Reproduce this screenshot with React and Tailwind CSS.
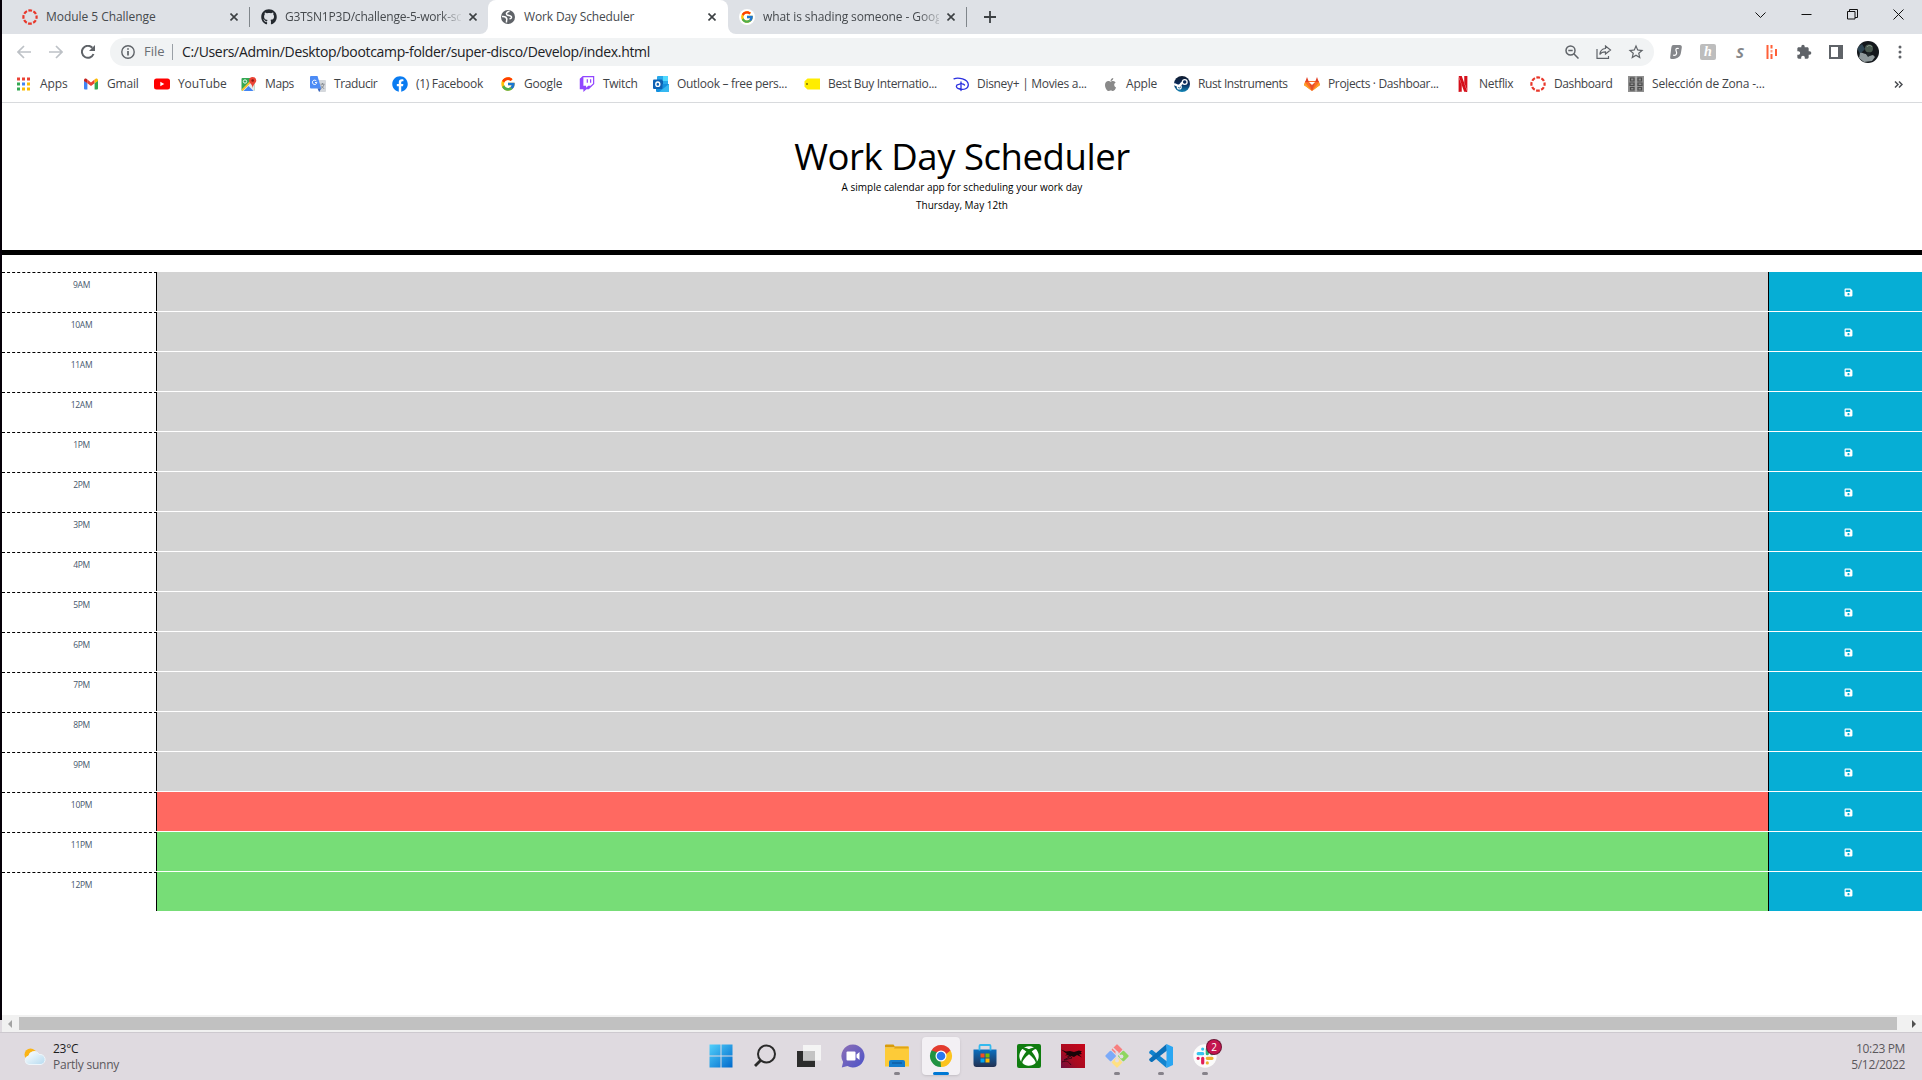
import React from "react";
import { FaGithub, FaTwitch, FaFacebook, FaApple, FaXbox, FaSave } from "react-icons/fa";
import { FcGoogle } from "react-icons/fc";
import { SiNetflix } from "react-icons/si";
import { MdExtension, MdStarBorder } from "react-icons/md";

const Canvas = () => (
  <svg viewBox="0 0 16 16" className="size-4 shrink-0" fill="none">
    <circle cx="8" cy="8" r="6.6" stroke="#e8372a" strokeWidth="2.2" strokeDasharray="3.7 1.484" strokeDashoffset="1.85" />
  </svg>
);

const Close = () => (
  <svg viewBox="0 0 8 8" className="size-2 shrink-0" stroke="#3c4043" strokeWidth="1.6">
    <path d="M.5.5l7 7M7.5.5l-7 7" />
  </svg>
);

const Globe = () => (
  <svg viewBox="0 0 16 16" className="size-4 shrink-0">
    <circle cx="8" cy="8" r="7" fill="#5f6368" />
    <path d="M9.500 2.200C6.500 3 5.800 4.500 7 5.800c1.500 1.200 3 .3 4.200 1.700.8 1.200-.2 2.300-1.700 2.300M2 7.500c2.500-.3 4.500.8 4.800 2.500.1 1.200-.6 1.800-.2 3.500" stroke="#fff" strokeWidth="1.500" fill="none" />
  </svg>
);

const AppsIcon = () => (
  <svg viewBox="0 0 16 16" className="size-4">
    {["#ea4335", "#ea4335", "#ea4335", "#34a853", "#4285f4", "#fbbc04", "#34a853", "#fbbc04", "#fbbc04"].map((c, i) => (
      <rect key={i} x={1 + (i % 3) * 5} y={1.5 + Math.floor(i / 3) * 5} width="3" height="3" fill={c} />
    ))}
  </svg>
);

const Gmail = () => (
  <svg viewBox="0 0 16 16" className="size-4">
    <path d="M1 4.5l3.4 2.6V13.5H2a1 1 0 0 1-1-1z" fill="#4285f4" />
    <path d="M15 4.5l-3.4 2.6v6.4H14a1 1 0 0 0 1-1z" fill="#34a853" />
    <path d="M4.4 3.6L8 6.4l3.6-2.8v3.7L8 10 4.4 7.3z" fill="#ea4335" />
    <path d="M1 4.3c0-1.8 1.7-2.1 2.6-1.4l.8.7v3.7L1 4.9z" fill="#c5221f" />
    <path d="M15 4.3c0-1.8-1.7-2.1-2.6-1.4l-.8.7v3.7L15 4.9z" fill="#fbbc04" />
  </svg>
);

const YouTube = () => (
  <svg viewBox="0 0 16 16" className="size-4">
    <rect y="2.5" width="16" height="11" rx="2.5" fill="#f00" />
    <path d="M6.3 5.7v4.6l4-2.3z" fill="#fff" />
  </svg>
);

const Maps = () => (
  <svg viewBox="0 0 16 16" className="size-4">
    <rect x=".5" y="2" width="13" height="13" rx="1" fill="#34a853" />
    <path d="M1 15L12 4l1.5 1.5v9.5z" fill="#e8eaed" />
    <path d="M2.5 15l5-5 5 5z" fill="#4285f4" />
    <path d="M.5 13.5l10-10 1.3 1.3L1.6 15z" fill="#fbc02d" />
    <circle cx="4" cy="5.5" r="1.7" fill="none" stroke="#fff" strokeWidth=".9" />
    <path d="M11.7 1a3.6 3.6 0 0 1 3.6 3.6c0 2.4-3.2 3.7-3.6 7.4-.4-3.7-3.6-5-3.6-7.4A3.6 3.6 0 0 1 11.7 1z" fill="#ea4335" />
    <circle cx="11.7" cy="4.5" r="1.3" fill="#8c1a13" />
  </svg>
);

const Translate = () => (
  <svg viewBox="0 0 16 16" className="size-4">
    <path d="M6 4h9a1 1 0 0 1 1 1v10a1 1 0 0 1-1 1H9z" fill="#d5d8dc" />
    <path d="M1 0h6.5l3.7 12.5H1a1 1 0 0 1-1-1V1a1 1 0 0 1 1-1z" fill="#4c8bf5" />
    <path d="M7.5 12.5h3.7L9.2 16z" fill="#3060c0" />
    <path d="M6.500 5.200A2.200 2.200 0 1 0 6.800 6.500H5" stroke="#fff" fill="none" />
    <path d="M10.500 8.200h4M12.500 7v1.200M14 8.500c-.6 2-1.800 3.200-3 4M11 9.500l3 3.300" stroke="#80868b" strokeWidth=".9" fill="none" />
  </svg>
);

const Facebook = () => <FaFacebook className="size-4 text-[#0b7cf1]" />;

const Outlook = () => (
  <svg viewBox="0 0 16 16" className="size-4">
    <rect x="4" width="11" height="9" rx="1" fill="#28a8ea" />
    <path d="M10 0h4a1 1 0 0 1 1 1v4h-5z" fill="#50d9ff" />
    <path d="M4 5h6v4H4z" fill="#0364b8" />
    <path d="M3 8l13 0v7a1 1 0 0 1-1 1H4a1 1 0 0 1-1-1z" fill="#1490df" />
    <path d="M16 8v7a1 1 0 0 1-1 1H6z" fill="#35b8f1" />
    <rect y="3.5" width="9.5" height="9.5" rx="1" fill="#0f62b4" />
    <ellipse cx="4.8" cy="8.2" rx="2" ry="2.2" fill="none" stroke="#fff" strokeWidth="1.4" />
  </svg>
);

const BestBuy = () => (
  <svg viewBox="0 0 16 16" className="size-4">
    <path d="M3.5 2.5H16v11H3.5L.5 10.8V5.2z" fill="#ffed00" />
    <circle cx="3" cy="8" r=".9" fill="#6b6300" />
  </svg>
);

const Disney = () => (
  <svg viewBox="0 0 16 16" className="size-4" fill="none" stroke="#2a2fe0" strokeLinecap="round">
    <path d="M1 2.800C5 1.200 15 2.800 15.300 8.500c.2 4.200-4.500 5.500-8.300 4.700" strokeWidth="1.300" />
    <path d="M8 6v8.500M4 9c3-1.200 6.500-1.200 7.500 0M4 9c-1.600 1.800 0 3.800 3.500 4" strokeWidth="1.300" />
  </svg>
);

const Gitlab = () => (
  <svg viewBox="0 0 16 16" className="size-4">
    <path d="M8 15L0 9l1.300-3.900h13.400L16 9z" fill="#fc6d26" />
    <path d="M8 15L.2 9.200 0 9l1-2.500z" fill="#fca326" />
    <path d="M8 15l8-6-1-2.500z" fill="#fca326" />
    <path d="M4.900 6L8 9.500 11.100 6z" fill="#fff" />
    <path d="M8 15L4.900 6.500 8 9l3.100-2.500z" fill="#e8502a" />
    <path d="M1.200 6L3 .9 4.900 6zM14.800 6L13 .9 11.100 6z" fill="#e24329" />
  </svg>
);

const Steam = () => (
  <svg viewBox="0 0 16 16" className="size-4">
    <defs>
      <linearGradient id="steam" x1="0" y1="0" x2="0" y2="1">
        <stop offset="0" stopColor="#111d2e" />
        <stop offset=".5" stopColor="#0a2a5c" />
        <stop offset="1" stopColor="#1387b8" />
      </linearGradient>
    </defs>
    <circle cx="8" cy="8" r="8" fill="url(#steam)" />
    <path d="M0 8l5.200 2.300 3-3.800" stroke="#fff" strokeWidth="2.200" fill="none" />
    <circle cx="5.300" cy="11" r="2" fill="none" stroke="#fff" strokeWidth="1.100" />
    <circle cx="10.700" cy="6" r="2.400" fill="#0a2a5c" stroke="#fff" strokeWidth="1.300" />
  </svg>
);

const Zona = () => (
  <svg viewBox="0 0 16 16" className="size-4">
    <rect width="16" height="16" fill="#8f8f8f" />
    <path d="M2.500 2h3.500v3H2.500zM2 7h4v2.500H2zM2.500 11.500h3.500v2.500H2.500zM10 2h3.500v3H10zM10 7h4v2.500h-4zM10 11.500h3.500v2.500H10z" fill="none" stroke="#4a4a4a" strokeWidth="1.200" />
    <path d="M8 0v16" stroke="#c8c8c8" strokeWidth=".8" />
  </svg>
);

const bookmarks = [
  { icon: <AppsIcon />, text: "Apps", w: "w-[67px]", t: "tracking-[-0.1px]" },
  { icon: <Gmail />, text: "Gmail", w: "w-[71px]", t: "tracking-[-0.2px]" },
  { icon: <YouTube />, text: "YouTube", w: "w-[87px]", t: "tracking-[-0.1px]" },
  { icon: <Maps />, text: "Maps", w: "w-[69px]", t: "tracking-[-0.4px]" },
  { icon: <Translate />, text: "Traducir", w: "w-[82px]", t: "tracking-[-0.4px]" },
  { icon: <Facebook />, text: "(1) Facebook", w: "w-[108px]", t: "tracking-[-0.3px]" },
  { icon: <FcGoogle className="size-4" />, text: "Google", w: "w-[79px]", t: "tracking-[-0.2px]" },
  { icon: <FaTwitch className="size-4 text-[#9146ff]" />, text: "Twitch", w: "w-[74px]", t: "tracking-[-0.3px]" },
  { icon: <Outlook />, text: "Outlook – free pers...", w: "w-[151px]", t: "tracking-[-0.3px]" },
  { icon: <BestBuy />, text: "Best Buy Internatio...", w: "w-[149px]", t: "tracking-[-0.35px]" },
  { icon: <Disney />, text: "Disney+ | Movies a...", w: "w-[149px]", t: "tracking-[-0.3px]" },
  { icon: <FaApple className="size-[15px] text-[#8a8a8a]" />, text: "Apple", w: "w-[72px]", t: "tracking-[-0.2px]" },
  { icon: <Steam />, text: "Rust Instruments", w: "w-[130px]", t: "tracking-[-0.4px]" },
  { icon: <Gitlab />, text: "Projects · Dashboar...", w: "w-[151px]", t: "tracking-[-0.35px]" },
  { icon: <SiNetflix className="size-4 text-[#d5101b]" />, text: "Netflix", w: "w-[75px]", t: "tracking-[-0.3px]" },
  { icon: <Canvas />, text: "Dashboard", w: "w-[98px]", t: "tracking-[-0.4px]" },
  { icon: <Zona />, text: "Selección de Zona -...", w: "w-[150px]", t: "tracking-[-0.2px]" },
];

function TabStrip() {
  return (
    <div className="flex h-[34px] bg-white text-[12px] text-[#45494d]">
      <div className="flex w-[248px] items-center bg-[#dee1e6] pl-5">
        <Canvas />
        <span className="ml-2 w-[180px] shrink-0 tracking-[-0.05px]">Module 5 Challenge</span>
        <span className="ml-[4px] shrink-0"><Close /></span>
        <span className="ml-[11px] h-5 w-px shrink-0 bg-[#80868b]" />
      </div>
      <div className="flex w-[238px] items-center rounded-br-lg bg-[#dee1e6] pl-[11px]">
        <FaGithub className="size-4 shrink-0 text-[#24292f]" />
        <span className="ml-2 w-[176px] whitespace-nowrap tracking-[-0.2px] [mask-image:linear-gradient(to_right,#000_155px,transparent_178px)]">G3TSN1P3D/challenge-5-work-sc</span>
        <span className="ml-2"><Close /></span>
      </div>
      <div className="flex w-[240px] bg-[#dee1e6]">
        <div className="flex w-full items-center rounded-t-lg bg-white pl-3">
          <Globe />
          <span className="ml-2 w-[180px] tracking-[-0.15px]">Work Day Scheduler</span>
          <span className="ml-1"><Close /></span>
        </div>
      </div>
      <div className="flex flex-1 rounded-bl-lg bg-[#dee1e6]">
        <div className="flex items-center pl-[11px]">
          <span className="flex size-4 items-center justify-center rounded-full bg-white"><FcGoogle className="size-[14px]" /></span>
          <span className="ml-2 w-[176px] whitespace-nowrap tracking-[-0.1px] [mask-image:linear-gradient(to_right,#000_155px,transparent_182px)]">what is shading someone - Goog</span>
          <span className="ml-2"><Close /></span>
          <span className="ml-[11px] h-5 w-px bg-[#80868b]" />
        </div>
        <svg viewBox="0 0 12 12" className="ml-[17px] mt-[11px] size-3" stroke="#3c4043" strokeWidth="1.800"><path d="M6 0v12M0 6h12" /></svg>
        <div className="ml-auto flex h-7 items-center">
          {[
            "M.5 3.500l5 5 5-5",
            "M.5 5.500h10",
            "M.5 2.500h7.500v7.500h-7.500zM2.500 2.500v-2h8v8h-2.500",
            "M.5.5l10 10M10.500.5l-10 10",
          ].map((d) => (
            <span key={d} className="flex w-[46px] justify-center pr-px">
              <svg viewBox="0 0 11 11" className="size-[11px]" fill="none" stroke="#111" strokeWidth="1"><path d={d} /></svg>
            </span>
          ))}
        </div>
      </div>
    </div>
  );
}

const Slot = ({ children }) => <span className="flex w-8 items-center justify-center">{children}</span>;

function Toolbar() {
  return (
    <div className="flex h-9 items-center pl-[6px] pr-[6px]">
      <Slot>
        <svg viewBox="0 0 14 14" className="size-[14px]" fill="none" stroke="#bdc1c6" strokeWidth="1.700"><path d="M14 7H1.500M7 1L1 7l6 6" /></svg>
      </Slot>
      <Slot>
        <svg viewBox="0 0 14 14" className="size-[14px]" fill="none" stroke="#bdc1c6" strokeWidth="1.700"><path d="M0 7h12.500M7 1l6 6-6 6" /></svg>
      </Slot>
      <Slot>
        <svg viewBox="0 0 14 14" className="size-[14px]" fill="none" stroke="#5f6368" strokeWidth="2"><path d="M12.500 9A6 6 0 1 1 11.300 2.700" /><path d="M14 0v6H8z" fill="#5f6368" stroke="none" /></svg>
      </Slot>
      <div className="ml-[6px] flex h-7 w-[1544px] items-center rounded-full bg-[#f1f3f4] pl-[11px] pr-[2px] text-[14px]">
        <svg viewBox="0 0 14 14" className="size-[14px]" fill="none" stroke="#5f6368" strokeWidth="1.400"><circle cx="7" cy="7" r="6.200" /><path d="M7 6v4.500M7 3.300v1.500" strokeWidth="1.700" /></svg>
        <span className="ml-[9px] w-[28px] text-[13px] text-[#6a6e73]">File</span>
        <span className="h-4 w-px bg-[#9aa0a6]" />
        <span className="-mt-px ml-[9px] tracking-[-0.33px] text-[#202124]">C:/Users/Admin/Desktop/bootcamp-folder/super-disco/Develop/index.html</span>
        <span className="ml-auto flex">
          <Slot>
            <svg viewBox="0 0 14 14" className="size-[14px]" fill="none" stroke="#5f6368" strokeWidth="1.500"><circle cx="5.500" cy="5.500" r="4.500" /><path d="M8.800 8.800L13.500 13.500M3.300 5.500h4.400" /></svg>
          </Slot>
          <Slot>
            <svg viewBox="0 0 16 14" className="h-[14px] w-4" fill="none" stroke="#5f6368" strokeWidth="1.200"><path d="M1 4v9.300h11.500V11M9.500 1l5 4-5 4V6.800c-3 0-4.700.9-5.700 2.700.3-3.500 2.300-5.700 5.700-6z" /></svg>
          </Slot>
          <Slot><MdStarBorder className="size-[18px] text-[#5f6368]" /></Slot>
        </span>
      </div>
      <div className="ml-auto flex">
        <Slot>
          <svg viewBox="0 0 12 14" className="h-[14px] w-3">
            <path d="M3.500 0h6.300C11.300 0 12 1 11.800 2.500L11 7.500C10.300 11.500 8 13.500 3.500 14H1.500C.3 14 0 13 .2 12l1-8.500C1.500 1 2 0 3.500 0z" fill="#85878b" />
            <path d="M8.800 3.500c-2-.6-3 .2-2.900 1.500.2 1.500 1.200 2.200.6 3.700-.5 1.400-1.600 1.900-3.300 1.400" stroke="#fff" strokeWidth="1.200" fill="none" />
          </svg>
        </Slot>
        <Slot>
          <span className="flex size-4 items-center justify-center rounded-[2px] bg-[#bdbdbd] font-['Liberation_Serif',serif] text-[14px] font-bold italic leading-none text-white">h</span>
        </Slot>
        <Slot><span className="text-[15px] font-bold italic leading-4 text-[#85878a]">S</span></Slot>
        <Slot>
          <svg viewBox="0 0 12 14" className="h-[14px] w-3" stroke="#ff6038" strokeWidth="2"><path d="M1.500 0v14M5.500 0v3.500M5.500 9v5M10 4v7" /><path d="M5.500 5v2.500" stroke="#ff9d82" /></svg>
        </Slot>
        <Slot><MdExtension className="size-4 text-[#5f6368]" /></Slot>
        <Slot>
          <svg viewBox="0 0 14 14" className="size-[14px]"><path d="M1 1h12v12H1z" fill="#fff" stroke="#5f6368" strokeWidth="2" /><path d="M9 1h5v12H9z" fill="#5f6368" /></svg>
        </Slot>
        <Slot>
          <svg viewBox="0 0 22 22" className="size-[22px] shrink-0">
            <clipPath id="avatar"><circle cx="11" cy="11" r="11" /></clipPath>
            <g clipPath="url(#avatar)">
              <path d="M0 0h22v22H0z" fill="#14181c" />
              <path d="M0 7l5-4 3 5-5 5z" fill="#2d4452" />
              <circle cx="12" cy="7.500" r="4" fill="#4a5a50" />
              <path d="M10 6c1-2 4-2 5 0" stroke="#8a9c8e" fill="none" />
              <path d="M3 12c3-1 4 1 6 1l3 2 4-1 2 2-3 4-8 1-5-4z" fill="#8f999b" />
              <path d="M12 11l2 3-3 2-2-3z" fill="#20282a" />
            </g>
          </svg>
        </Slot>
        <Slot>
          <svg viewBox="0 0 4 14" className="h-[14px] w-1" fill="#5f6368"><circle cx="2" cy="2" r="1.500" /><circle cx="2" cy="7" r="1.500" /><circle cx="2" cy="12" r="1.500" /></svg>
        </Slot>
      </div>
    </div>
  );
}

function Bookmarks() {
  return (
    <div className="flex h-[33px] items-center border-b border-[#d8dadd] pb-[4px] pl-[14px] text-[12px] text-[#3f4347]">
      {bookmarks.map((b) => (
        <div key={b.text} className={"flex shrink-0 items-center whitespace-nowrap " + b.w}>
          <span className="mr-2 flex size-4 shrink-0 items-center justify-center">{b.icon}</span>
          <span className={b.t}>{b.text}</span>
        </div>
      ))}
      <svg viewBox="0 0 9 7" className="ml-auto mr-[19px] h-[7px] w-[9px]" fill="none" stroke="#4a4d51" strokeWidth="1.500"><path d="M1 .5l3 3-3 3M5 .5l3 3-3 3" /></svg>
    </div>
  );
}

const hours = ["9AM", "10AM", "11AM", "12AM", "1PM", "2PM", "3PM", "4PM", "5PM", "6PM", "7PM", "8PM", "9PM", "10PM", "11PM", "12PM"];
const shade = (i) => (i < 13 ? "bg-[#d3d3d3]" : i === 13 ? "bg-[#ff6961]" : "bg-[#77dd77]");

function Planner() {
  return (
    <main className="flex h-[912px] flex-col bg-white font-['Open_Sans',sans-serif]">
      <header className="flex h-[152px] flex-col items-center border-b-[5px] border-black pt-[31px] text-black">
        <h1 className="text-[36.5px] font-normal leading-[45px] tracking-[-0.45px]">Work Day Scheduler</h1>
        <p className="mt-px text-[10px] leading-[15px]">A simple calendar app for scheduling your work day</p>
        <p className="mt-[3px] text-[10px] leading-[15px]">Thursday, May 12th</p>
      </header>
      <section className="mt-[17px] flex flex-col gap-px">
        {hours.map((h, i) => (
          <div key={h} className="flex h-[39px]">
            <div className="flex w-[155px] justify-center border-r border-t border-r-black border-t-black pl-[5px] pt-[6px] text-[8.5px] leading-[12px] tracking-[-0.3px] text-[#46566c] [border-top-style:dashed]">{h}</div>
            <div className={"flex-1 " + shade(i)} />
            <div className="flex w-[154px] items-center justify-center border-l border-black bg-[#06aed5] pl-[6px] pt-px">
              <FaSave className="size-[9px] text-white" />
            </div>
          </div>
        ))}
      </section>
    </main>
  );
}

function ScrollBar() {
  return (
    <div className="flex h-[17px] items-center justify-between bg-[#f1f1f1] pl-[6px] pr-[6px]">
      <svg viewBox="0 0 4 8" className="h-2 w-1" fill="#a3a3a3"><path d="M4 0v8L0 4z" /></svg>
      <span className="ml-[7px] mr-[15px] h-[13px] flex-1 bg-[#c1c1c1]" />
      <svg viewBox="0 0 4 8" className="h-2 w-1" fill="#505050"><path d="M0 0v8l4-4z" /></svg>
    </div>
  );
}

const Windows = () => (
  <svg viewBox="0 0 24 24" className="size-6">
    <defs><linearGradient id="win" x1="0" y1="0" x2="1" y2="1"><stop stopColor="#52d0fb" /><stop offset="1" stopColor="#0069cc" /></linearGradient></defs>
    <path d="M.5.5h11v11H.5zM12.500.5h11v11h-11zM.5 12.500h11v11H.5zM12.500 12.500h11v11h-11z" fill="url(#win)" />
  </svg>
);
const Search = () => (
  <svg viewBox="0 0 24 24" className="size-6" fill="none" stroke="#2a2a2a"><circle cx="13.500" cy="10" r="8.500" strokeWidth="2" /><path d="M7.500 16.500L2 22" strokeWidth="2.800" /></svg>
);
const TaskView = () => (
  <svg viewBox="0 0 24 24" className="size-6">
    <path d="M0 7h18v16H0z" fill="#2c2c2c" /><path d="M6 1h18v15.500H6z" fill="#f4f4f4" /><path d="M6 7h12v9.500H6z" fill="#c4c4c4" />
  </svg>
);
const Chat = () => (
  <svg viewBox="0 0 24 24" className="size-6">
    <defs><linearGradient id="chat" x1="0" y1="0" x2="1" y2="1"><stop stopColor="#8d6fb5" /><stop offset="1" stopColor="#4b53c9" /></linearGradient></defs>
    <path d="M12 .5a11.500 11.500 0 1 1-5.500 21.600L.8 23.500l1.300-5.600A11.500 11.500 0 0 1 12 .5z" fill="url(#chat)" />
    <rect x="5.500" y="7.500" width="9" height="9" rx="1" fill="#fff" /><path d="M15.500 10.500l3-2.500v8l-3-2.500z" fill="#fff" />
  </svg>
);
const Folder = () => (
  <svg viewBox="0 0 24 24" className="size-6">
    <path d="M0 1.500a1 1 0 0 1 1-1h7.500l2 3H0z" fill="#d89b0a" /><path d="M0 3.500h9l1-1h13a1 1 0 0 1 1 1V22.500H0z" fill="#fdcb38" /><path d="M10 2.500h13.500v2H9z" fill="#e0a416" />
    <path d="M4 23v-5a2 2 0 0 1 2-2h12a2 2 0 0 1 2 2v5z" fill="#147ccc" /><path d="M7 18.500h10v1H7z" fill="#0b4f91" />
  </svg>
);
const Chrome = () => (
  <svg viewBox="0 0 24 24" className="size-6">
    <path d="M12 12L2.470 6.500A11 11 0 0 1 21.530 6.500z" fill="#e33b2e" />
    <path d="M12 12L21.530 6.500A11 11 0 0 1 12 23z" fill="#fcc31e" />
    <path d="M12 12v11A11 11 0 0 1 2.470 6.500z" fill="#229342" />
    <path d="M12 6.500h9.500l-5 4z" fill="#e33b2e" />
    <path d="M7.300 14.800L2.500 6.500l6.500 2z" fill="#229342" /><path d="M16.700 14.800L12 23l-.5-6z" fill="#fcc31e" />
    <circle cx="12" cy="12" r="5.500" fill="#fff" /><circle cx="12" cy="12" r="4.300" fill="#2a78f0" />
  </svg>
);
const Store = () => (
  <svg viewBox="0 0 24 24" className="size-6">
    <defs><linearGradient id="store" x1="0" y1="0" x2="0" y2="1"><stop stopColor="#0a6fc0" /><stop offset="1" stopColor="#223052" /></linearGradient></defs>
    <path d="M.5 5.500h23V20a3 3 0 0 1-3 3h-17a3 3 0 0 1-3-3z" fill="url(#store)" />
    <path d="M6.500 6.500V2a1 1 0 0 1 1-1h9a1 1 0 0 1 1 1v4.500" fill="none" stroke="#35b9ee" strokeWidth="1.800" />
    <path d="M7.500 9.500h4v4h-4z" fill="#f25022" /><path d="M12.500 9.500h4v4h-4z" fill="#7fba00" /><path d="M7.500 14.500h4v4h-4z" fill="#00a4ef" /><path d="M12.500 14.500h4v4h-4z" fill="#ffb900" />
  </svg>
);
const Xbox = () => (
  <span className="flex size-6 items-center justify-center rounded-[2px] bg-[#107c10]"><FaXbox className="size-5 text-white" /></span>
);
const Dragon = () => (
  <svg viewBox="0 0 24 24" className="size-6">
    <defs><linearGradient id="drg" x1="1" y1="0" x2="0" y2="1"><stop stopColor="#c8061a" /><stop offset=".6" stopColor="#a80a20" /><stop offset="1" stopColor="#6e1040" /></linearGradient></defs>
    <path d="M0 0h24v24H0z" fill="url(#drg)" />
    <path d="M0 5.500l5 2 4-.5 4 1 5-1.500 3 1-1.500 1L21 10l-3 .5 3 3-5-2.500-3 2-3-1-4 1 2-2-4 .5 2-1.500z" fill="#1a0508" />
    <path d="M9 12l2 2-8 2 7-4M1 18c5-2 7 0 9 3" stroke="#3d0716" fill="none" />
  </svg>
);
const Git = () => (
  <svg viewBox="0 0 24 24" className="size-6">
    <g transform="rotate(45 12 12)">
      <rect x="3.500" y="3.500" width="8" height="8" rx="1" fill="#f77f7f" /><rect x="12.500" y="3.500" width="8" height="8" rx="1" fill="#8ed65f" />
      <rect x="3.500" y="12.500" width="8" height="8" rx="1" fill="#7caaf8" /><rect x="12.500" y="12.500" width="8" height="8" rx="1" fill="#ffe082" />
    </g>
    <path d="M8 4l4 4v9M12 9l4 3.500" stroke="#e3dee4" strokeWidth="1.500" fill="none" />
    <circle cx="12" cy="9" r="1.700" fill="#e3dee4" /><circle cx="12" cy="16.500" r="1.900" fill="#e3dee4" /><circle cx="16.500" cy="12.500" r="1.900" fill="#e3dee4" />
  </svg>
);
const VsCode = () => (
  <svg viewBox="0 0 24 24" className="size-6">
    <path d="M17.500 24L.5 9.200 0 8l2-2 1.200.1L18 17.500z" fill="#1284cf" />
    <path d="M17.500 0L.5 14.800 0 16l2 2 1.200-.1L18 6.500z" fill="#0a6fb8" />
    <path d="M17.500 0L24 3v18l-6.500 3z" fill="#2aa6f2" />
  </svg>
);
const Slack = () => (
  <span className="relative flex size-6">
    <svg viewBox="0 0 24 24" className="size-6">
      <circle cx="12" cy="12" r="11.700" fill="#fbfbfb" />
      <g strokeWidth="3.200" strokeLinecap="round">
        <path d="M9.700 5v.1M5.200 9.700h4.500" stroke="#36c5f0" />
        <path d="M14.300 5v4.700M19 9.700h-.1" stroke="#2eb67d" />
        <path d="M14.300 14.300h4.700M14.300 19v-.1" stroke="#ecb22e" />
        <path d="M9.700 14.300v4.700M5.100 14.300h.1" stroke="#e01e5a" />
      </g>
    </svg>
    <span className="absolute -right-[4px] -top-[4px] flex size-[14px] items-center justify-center rounded-full bg-[#c4154f] text-[10px] leading-none text-white ring-1 ring-[#6d1433]">2</span>
  </span>
);

const apps = [
  { el: <Windows /> }, { el: <Search /> }, { el: <TaskView /> }, { el: <Chat /> },
  { el: <Folder />, dot: true }, { el: <Chrome />, active: true }, { el: <Store /> }, { el: <Xbox /> },
  { el: <Dragon /> }, { el: <Git />, dot: true }, { el: <VsCode />, dot: true }, { el: <Slack />, dot: true },
];

function Taskbar() {
  return (
    <footer className="flex h-12 border-t border-[#cdc9cf] bg-[#dfdae0] text-[12px]">
      <div className="flex w-[699px] items-center pl-6">
        <svg viewBox="0 0 22 18" className="h-[18px] w-[22px]">
          <defs><linearGradient id="cloud" x1="0" y1="0" x2="1" y2="1"><stop stopColor="#fff" /><stop offset="1" stopColor="#b5daf0" /></linearGradient></defs>
          <circle cx="6.500" cy="6.500" r="6" fill="#fbb416" />
          <path d="M5 16.500a4.300 4.300 0 0 1-.3-8.500 5.500 5.500 0 0 1 10.300-1.500 5 5 0 0 1 2 10z" fill="url(#cloud)" stroke="#eef6fb" />
        </svg>
        <div className="ml-[7px] leading-4 tracking-[-0.25px]">
          <div className="text-[#1c1c1c]">23°C</div>
          <div className="text-[#5b585d]">Partly sunny</div>
        </div>
      </div>
      <div className="flex">
        {apps.map((a, i) => (
          <div key={i} className="flex w-11 justify-center">
            <div className={"mt-1 flex h-[38px] w-[38px] flex-col items-center pt-[7px] " + (a.active ? "rounded bg-[#f3f0f4] shadow-sm" : "")}>
              {a.el}
              {a.active && <span className="mt-1 h-[3px] w-4 shrink-0 rounded-full bg-[#0078d4]" />}
              {a.dot && <span className="mt-1 h-[3px] w-[6px] shrink-0 rounded-full bg-[#86828a]" />}
            </div>
          </div>
        ))}
      </div>
      <div className="ml-auto mr-[17px] flex flex-col justify-center text-right leading-4 tracking-[-0.35px] text-[#5b585d]">
        <div>10:23 PM</div>
        <div>5/12/2022</div>
      </div>
    </footer>
  );
}

export default function App() {
  return (
    <div className="h-[1080px] w-[1922px] overflow-hidden bg-[#dfdae0] font-['Open_Sans',sans-serif]">
      <div className="flex">
        <div className="h-[1020px] w-[2px] bg-[#050008]" />
        <div className="w-[1920px] bg-white">
          <TabStrip />
          <Toolbar />
          <Bookmarks />
          <Planner />
          <ScrollBar />
        </div>
      </div>
      <Taskbar />
    </div>
  );
}
